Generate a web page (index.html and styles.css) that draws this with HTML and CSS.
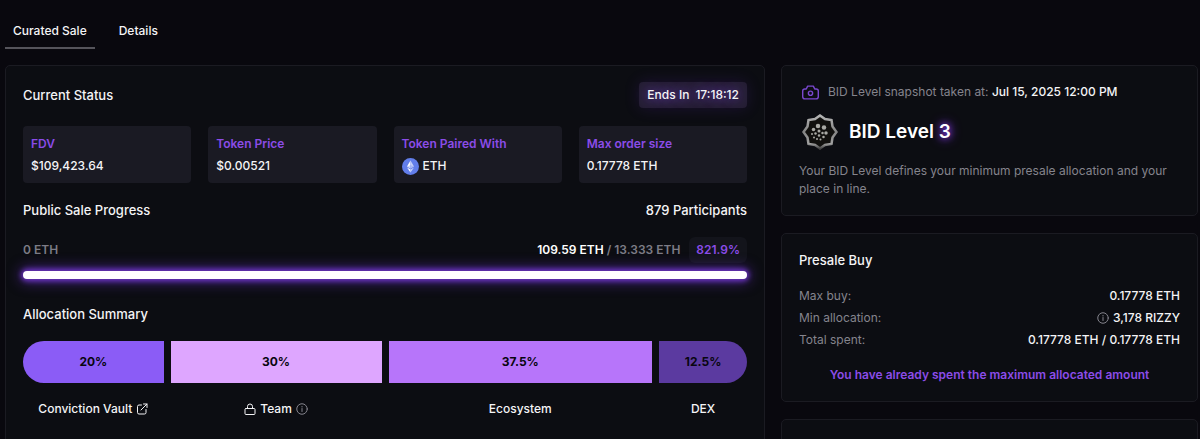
FILE: index.html
```
<!DOCTYPE html>
<html lang="en">
<head>
    <meta charset="UTF-8">
    <meta name="viewport" content="width=device-width, initial-scale=1">
    <title>Curated Sale</title>
    <link rel="stylesheet" href="styles.css">
</head>
<body>
    <svg class="sprite" aria-hidden="true">
        <symbol id="info" viewBox="0 0 24 24">
            <circle cx="12" cy="12" r="10.5"/>
            <path d="M12 11v6M12 7v1"/>
        </symbol>
    </svg>
    <div class="page">
        <nav class="tabs" role="tablist">
            <button class="tab active" role="tab" aria-selected="true">Curated Sale</button>
            <button class="tab" role="tab" aria-selected="false">Details</button>
        </nav>
        <div class="layout">
            <main class="card sale">
                <div class="row status-head">
                    <h2>Current Status</h2>
                    <div class="countdown"><span>Ends In</span><span>17:18:12</span></div>
                </div>
                <div class="stats">
                    <div class="stat">
                        <h3>FDV</h3>
                        <p>$109,423.64</p>
                    </div>
                    <div class="stat">
                        <h3>Token Price</h3>
                        <p>$0.00521</p>
                    </div>
                    <div class="stat">
                        <h3>Token Paired With</h3>
                        <p>
                            <svg class="eth" viewBox="0 0 34 34">
                                <circle cx="17" cy="17" r="17" fill="#627eea"/>
                                <path d="M17 5l-7 12 7 4z" fill="#fff"/>
                                <path d="M17 5l7 12-7 4z" fill="#c5d0f8"/>
                                <path d="M10 19l7 4v6z" fill="#fff"/>
                                <path d="M24 19l-7 4v6z" fill="#c5d0f8"/>
                                <path d="M17 14l-7 3 7 4 7-4z" fill="#8299ef" opacity=".4"/>
                            </svg>
                            ETH
                        </p>
                    </div>
                    <div class="stat">
                        <h3>Max order size</h3>
                        <p>0.17778 ETH</p>
                    </div>
                </div>
                <div class="row progress-head">
                    <h2>Public Sale Progress</h2>
                    <span class="participants">879 Participants</span>
                </div>
                <div class="row amounts">
                    <span>0 ETH</span>
                    <div class="raised">
                        <span><b>109.59 ETH</b> / 13.333 ETH</span>
                        <span class="percent">821.9%</span>
                    </div>
                </div>
                <div class="progress"></div>
                <h2 class="alloc-title">Allocation Summary</h2>
                <div class="alloc">
                    <div class="bar vault">20%</div>
                    <div class="bar team">30%</div>
                    <div class="bar ecosystem">37.5%</div>
                    <div class="bar dex">12.5%</div>
                    <a class="label" href="#">Conviction Vault
                        <svg class="icon" viewBox="0 0 24 24">
                            <path d="M11 4H6a3 3 0 0 0-3 3v12a3 3 0 0 0 3 3h11a3 3 0 0 0 3-3v-6M15 2h7v7M22 2L10 14"/>
                        </svg>
                    </a>
                    <div class="label">
                        <svg class="icon" viewBox="0 0 24 24">
                            <rect x="2" y="11" width="20" height="12" rx="2"/>
                            <path d="M7 11V7a5 5 0 0 1 10 0v4"/>
                        </svg>
                        Team
                        <svg class="icon muted"><use href="#info"/></svg>
                    </div>
                    <div class="label">Ecosystem</div>
                    <div class="label">DEX</div>
                </div>
            </main>
            <aside class="side">
                <section class="card level">
                    <div class="snapshot">
                        <svg class="camera" viewBox="0 0 24 24">
                            <path d="M8 3h8l2 4h2a3 3 0 0 1 3 3v8a3 3 0 0 1-3 3H4a3 3 0 0 1-3-3v-8a3 3 0 0 1 3-3h2z"/>
                            <circle cx="12" cy="13" r="3"/>
                        </svg>
                        <p>BID Level snapshot taken at: <b>Jul 15, 2025 12:00 PM</b></p>
                    </div>
                    <div class="rank">
                        <svg class="medal" viewBox="0 0 72 72">
                            <defs>
                                <linearGradient id="silver" x1="0" y1="0" x2="0" y2="1">
                                    <stop offset="0" stop-color="#b4b4b4"/>
                                    <stop offset=".5" stop-color="#858585"/>
                                    <stop offset=".85" stop-color="#a0a0a0"/>
                                    <stop offset="1" stop-color="#444"/>
                                </linearGradient>
                            </defs>
                            <path d="M36 3l10 7 13 2 2 13 8 11-8 11-2 13-13 2-10 7-10-7-13-2-2-13-8-11 8-11 2-13 13-2z" fill="#11100e" stroke="url(#silver)" stroke-width="5"/>
                            <g fill="#a9a9a4">
                                <circle cx="32" cy="24" r="4.500"/>
                                <circle cx="44" cy="27" r="4.500"/>
                                <circle cx="23" cy="31" r="3.500"/>
                                <circle cx="34" cy="34" r="3"/>
                                <circle cx="48" cy="38" r="3.500"/>
                                <circle cx="41" cy="38" r="2.500"/>
                                <circle cx="27" cy="39" r="2.500"/>
                                <circle cx="20" cy="40" r="2"/>
                                <circle cx="34" cy="43" r="2.500"/>
                                <circle cx="43" cy="46" r="2.500"/>
                                <circle cx="24" cy="47" r="2"/>
                                <circle cx="30" cy="50" r="2"/>
                                <circle cx="37" cy="51" r="2"/>
                            </g>
                        </svg>
                        <h1>BID Level <span>3</span></h1>
                    </div>
                    <p class="hint">Your BID Level defines your minimum presale allocation and your place in line.</p>
                </section>
                <section class="card presale">
                    <h2>Presale Buy</h2>
                    <dl>
                        <div class="row"><dt>Max buy:</dt><dd>0.17778 ETH</dd></div>
                        <div class="row"><dt>Min allocation:</dt><dd><svg class="icon muted"><use href="#info"/></svg>3,178 RIZZY</dd></div>
                        <div class="row"><dt>Total spent:</dt><dd>0.17778 ETH / 0.17778 ETH</dd></div>
                    </dl>
                    <p class="notice">You have already spent the maximum allocated amount</p>
                </section>
                <section class="card more"></section>
            </aside>
        </div>
    </div>
</body>
</html>
```
FILE: styles.css
```
* {
    box-sizing: border-box;
}
body {
    margin: 0;
    background: #09080e;
    color: #f4f4f6;
    font-family: Inter, "Liberation Sans", sans-serif;
    font-size: 12px;
    line-height: 18px;
}
h1, h2, h3, p, dl, dd {
    margin: 0;
}
h2 {
    font-size: 13px;
    font-weight: 500;
    line-height: 18px;
}
.sprite {
    display: none;
}
.page {
    display: flex;
    flex-direction: column;
    height: 100vh;
    overflow: hidden;
    padding: 14px 2px 0 5px;
}
.tabs {
    display: flex;
    gap: 16px;
    margin-bottom: 16px;
}
.tab {
    height: 35px;
    padding: 0 8px;
    border: 0;
    border-bottom: 2px solid transparent;
    background: none;
    color: inherit;
    font: inherit;
    font-weight: 500;
    cursor: pointer;
}
.tab.active {
    border-bottom-color: #55545b;
}
.layout {
    display: grid;
    grid-template-columns: 760fr 417fr;
    gap: 16px;
    flex: none;
}
.card {
    border: 1px solid #1b1b22;
    border-radius: 5px;
    background: #0c0d12;
    padding: 16px 17px;
}
.row {
    display: flex;
    align-items: center;
    justify-content: space-between;
}
.icon {
    width: 12px;
    height: 12px;
    fill: none;
    stroke: currentColor;
    stroke-width: 2;
    stroke-linecap: round;
    stroke-linejoin: round;
}
.muted {
    color: #85848d;
}

/* sale card */
.countdown {
    display: flex;
    gap: 6px;
    padding: 4px 8px;
    border-radius: 4px;
    background: #241e33;
    box-shadow: 0 0 16px rgba(124, 58, 237, .15);
    font-weight: 500;
    text-shadow: 0 0 12px #8b4cf6;
}
.stats {
    display: grid;
    grid-template-columns: repeat(4, 1fr);
    gap: 17px;
    margin-top: 18px;
}
.stat {
    height: 57px;
    padding: 7px 8px;
    border-radius: 4px;
    background: #1a1a23;
}
.stat h3 {
    color: #8b4ce8;
    font-size: 12px;
    font-weight: 600;
    line-height: 22px;
}
.stat p {
    display: flex;
    align-items: center;
    gap: 4px;
    font-weight: 500;
    line-height: 22px;
}
.eth {
    width: 17px;
    height: 17px;
}
.progress-head {
    margin-top: 18px;
}
.participants {
    font-size: 13px;
    font-weight: 500;
}
.amounts {
    margin-top: 18px;
    color: #7d7c86;
    font-weight: 600;
}
.amounts b {
    color: #fff;
}
.raised {
    display: flex;
    align-items: center;
    gap: 9px;
}
.percent {
    padding: 4px 7px;
    border-radius: 6px;
    background: #13141b;
    color: #8b4ce8;
}
.amounts b, .amounts span {
    font-weight: 600;
}
.progress {
    position: relative;
    height: 8px;
    margin-top: 8px;
    border-radius: 4px;
    background: #fff;
    box-shadow: 0 0 5px 2px #6d35c4, 0 0 14px 3px rgba(124, 58, 237, .5);
}
.alloc-title {
    margin-top: 26px;
}
.alloc {
    display: grid;
    grid-template-columns: 20fr 30fr 37.5fr 12.5fr;
    column-gap: 7px;
    row-gap: 17px;
    margin-top: 18px;
}
.bar {
    height: 42px;
    color: #08060f;
    font-weight: 700;
    line-height: 42px;
    text-align: center;
}
.vault {
    border-radius: 21px 0 0 21px;
    background: #8b5cf6;
}
.team {
    background: #dea6ff;
}
.ecosystem {
    background: #b775fa;
}
.dex {
    border-radius: 0 21px 21px 0;
    background: #5b3aa0;
}
.label {
    display: flex;
    align-items: center;
    justify-content: center;
    gap: 4px;
    color: inherit;
    font-weight: 500;
    text-decoration: none;
}

/* right column */
.side {
    display: flex;
    flex-direction: column;
    gap: 17px;
}
.side .card {
    padding: 17px;
}
.snapshot {
    display: flex;
    align-items: center;
    gap: 9px;
    padding-left: 3px;
    color: #85848d;
}
.snapshot b {
    color: #f4f4f6;
    font-weight: 500;
}
.camera {
    width: 17px;
    height: 17px;
    fill: none;
    stroke: #7a48cf;
    stroke-width: 2;
    stroke-linejoin: round;
}
.rank {
    display: flex;
    align-items: center;
    gap: 11px;
    margin: 13px 0 12px;
    padding-left: 3px;
}
.medal {
    width: 36px;
    height: 36px;
}
.rank h1 {
    color: #fff;
    font-size: 19px;
    font-weight: 600;
    line-height: 24px;
}
.rank span {
    text-shadow: 0 0 6px #8b3cf6, 0 0 12px #8b3cf6;
}
.hint {
    color: #85848d;
}
.presale dl {
    display: grid;
    row-gap: 4px;
    margin: 18px 0 17px;
}
.presale dt {
    color: #85848d;
}
.presale dd {
    display: flex;
    align-items: center;
    gap: 4px;
    font-weight: 500;
}
.notice {
    color: #8b4ce8;
    font-weight: 600;
    text-align: center;
}
.more {
    min-height: 60px;
}
```
